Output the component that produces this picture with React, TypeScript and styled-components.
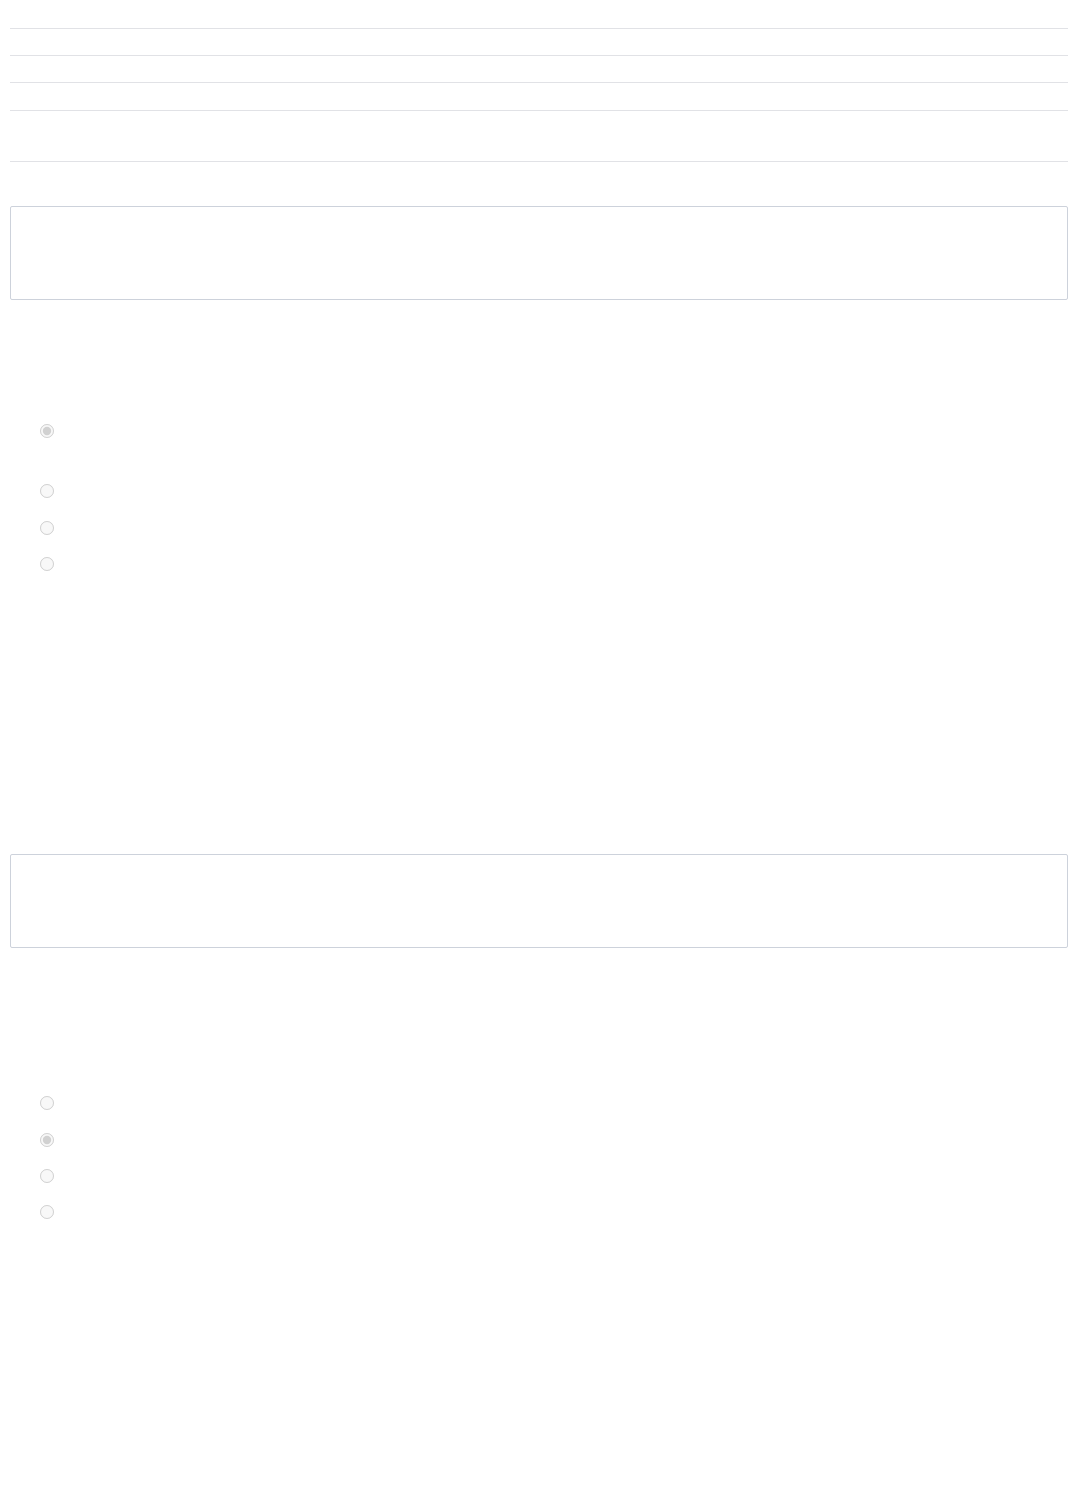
import styled, { createGlobalStyle } from 'styled-components';

const GlobalStyle = createGlobalStyle`
    html, body {
        margin: 0;
        padding: 0;
        background: #ffffff;
        font-family: "Open Sans", "Liberation Sans", sans-serif;
        font-size: 14px;
        color: #333333;
    }
`

const Page = styled.div`
    padding: 0 9px 0 10px;
    min-height: 1497px;
    box-sizing: border-box;
`

const InfoTable = styled.div`
    display: flex;
    flex-direction: column;
`

const InfoRow = styled.div<{ $h: number }>`
    height: ${p => p.$h}px;
    border-bottom: 1px solid #e1e2e6;
`

const AnswerBox = styled.div<{ $top: number }>`
    margin-top: ${p => p.$top}px;
    height: 92px;
    border: 1px solid #cdd2db;
    border-radius: 2px;
    background: #ffffff;
`

const Options = styled.div<{ $top: number }>`
    margin-top: ${p => p.$top}px;
    padding-left: 30px;
    display: flex;
    flex-direction: column;
`

const Option = styled.label<{ $h: number }>`
    display: flex;
    align-items: flex-start;
    gap: 10px;
    height: ${p => p.$h}px;

    input {
        margin: 0;
        width: 14px;
        height: 14px;
    }
`

interface IQuestion {
    boxTop: number
    optionsTop: number
    rows: number[]
    checked: number
    name: string
}

const Question = ( props: IQuestion ) => {
    return (
        <>
            <AnswerBox $top={props.boxTop} />
            <Options $top={props.optionsTop}>
                {props.rows.map((h, i) => (
                    <Option key={i} $h={h}>
                        <input type='radio' name={props.name} disabled defaultChecked={i === props.checked} />
                    </Option>
                ))}
            </Options>
        </>
    )
}

const App = () => {
    return (
        <Page>
            <GlobalStyle />
            <InfoTable>
                <InfoRow $h={28} />
                <InfoRow $h={26} />
                <InfoRow $h={26} />
                <InfoRow $h={27} />
                <InfoRow $h={50} />
            </InfoTable>
            <Question boxTop={44} optionsTop={124} rows={[60, 37, 36, 36]} checked={0} name='q1' />
            <Question boxTop={261} optionsTop={148} rows={[37, 36, 36, 36]} checked={1} name='q2' />
        </Page>
    )
}

export default App
